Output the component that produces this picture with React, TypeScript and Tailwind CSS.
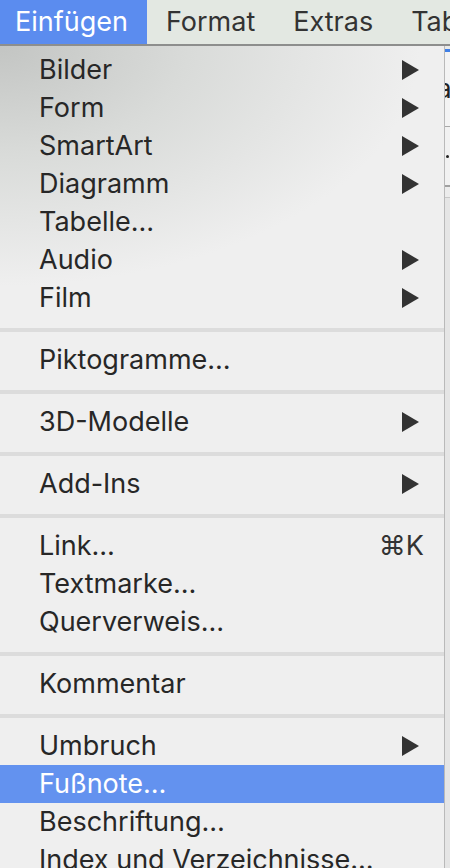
import React from "react";

type Item =
  | { type: "item"; label: string; arrow?: boolean; shortcut?: string; active?: boolean }
  | { type: "sep" };

const items: Item[] = [
  { type: "item", label: "Bilder", arrow: true },
  { type: "item", label: "Form", arrow: true },
  { type: "item", label: "SmartArt", arrow: true },
  { type: "item", label: "Diagramm", arrow: true },
  { type: "item", label: "Tabelle…" },
  { type: "item", label: "Audio", arrow: true },
  { type: "item", label: "Film", arrow: true },
  { type: "sep" },
  { type: "item", label: "Piktogramme…" },
  { type: "sep" },
  { type: "item", label: "3D-Modelle", arrow: true },
  { type: "sep" },
  { type: "item", label: "Add-Ins", arrow: true },
  { type: "sep" },
  { type: "item", label: "Link…", shortcut: "⌘K" },
  { type: "item", label: "Textmarke…" },
  { type: "item", label: "Querverweis…" },
  { type: "sep" },
  { type: "item", label: "Kommentar" },
  { type: "sep" },
  { type: "item", label: "Umbruch", arrow: true },
  { type: "item", label: "Fußnote…", active: true },
  { type: "item", label: "Beschriftung…" },
  { type: "item", label: "Index und Verzeichnisse…" },
];

function Arrow() {
  return (
    <svg width="17" height="20" viewBox="0 0 17 20" className="shrink-0">
      <polygon points="0,0 17,10 0,20" fill="#333333" />
    </svg>
  );
}

export default function App() {
  return (
    <div
      className="w-[450px] h-[868px] overflow-hidden flex flex-col bg-[#e4e4e4]"
      style={{ fontFamily: "Inter, 'Noto Sans', sans-serif" }}
    >
      {/* Menu bar */}
      <div className="h-[44px] shrink-0 flex items-stretch bg-[#e3e8e2] text-[27px] text-[#333333] whitespace-nowrap">
        <div className="flex items-center pl-[15px] pr-[19px] bg-[#5b8cef] text-white">Einfügen</div>
        <div className="flex items-center pl-[19px] pr-[19px]">Format</div>
        <div className="flex items-center pl-[19px] pr-[19px]">Extras</div>
        <div className="flex items-center pl-[19px]">Tabelle</div>
      </div>
      <div className="h-[2px] shrink-0 bg-[#8d8e8d]" />

      <div className="flex flex-1 min-h-0">
        {/* Dropdown menu */}
        <div className="w-[444px] shrink-0 pt-[5px] flex flex-col bg-[radial-gradient(ellipse_420px_240px_at_0%_0%,#c3c5c3_0%,#d9dbd9_45%,#efefef_100%)]">
          {items.map((it, i) =>
            it.type === "sep" ? (
              <div key={i} className="shrink-0 mt-[11px] mb-[9px] h-[4px] bg-[#dcdcdc]" />
            ) : (
              <div
                key={i}
                className={
                  "h-[38px] shrink-0 flex items-center justify-between pl-[39px] text-[27px] whitespace-nowrap " +
                  (it.shortcut ? "pr-[20px] " : "pr-[25px] ") +
                  (it.active ? "bg-[#6392ef] text-white" : "text-[#272727]")
                }
              >
                <span>{it.label}</span>
                {it.arrow && <Arrow />}
                {it.shortcut && <span className="text-[#333333]">{it.shortcut}</span>}
              </div>
            )
          )}
        </div>
        <div className="w-px shrink-0 bg-[#b9b9b9]" />

        {/* Background window sliver */}
        <div className="flex-1 flex flex-col overflow-hidden">
          <div className="h-[3px] bg-[#e8eae8]" />
          <div className="h-[3px] bg-[#3f7fe6]" />
          <div className="h-[74px] bg-[#f3f3f3] flex items-center overflow-hidden">
            <span className="-ml-[8px] text-[26px] leading-none text-[#222]">a</span>
          </div>
          <div className="h-[1px] bg-[#a8a8a8]" />
          <div className="h-[58px] bg-[#f1f1f1] flex items-center">
            <div className="w-[3px] h-[3px] ml-[1px] rounded-full bg-[#222]" />
          </div>
          <div className="h-[2px] bg-[#a0a0a0]" />
          <div className="h-[10px] bg-[#ececec]" />
          <div className="h-[1px] bg-[#c8c8c8]" />
          <div className="flex-1 bg-[#e5e5e5]" />
        </div>
      </div>
    </div>
  );
}
